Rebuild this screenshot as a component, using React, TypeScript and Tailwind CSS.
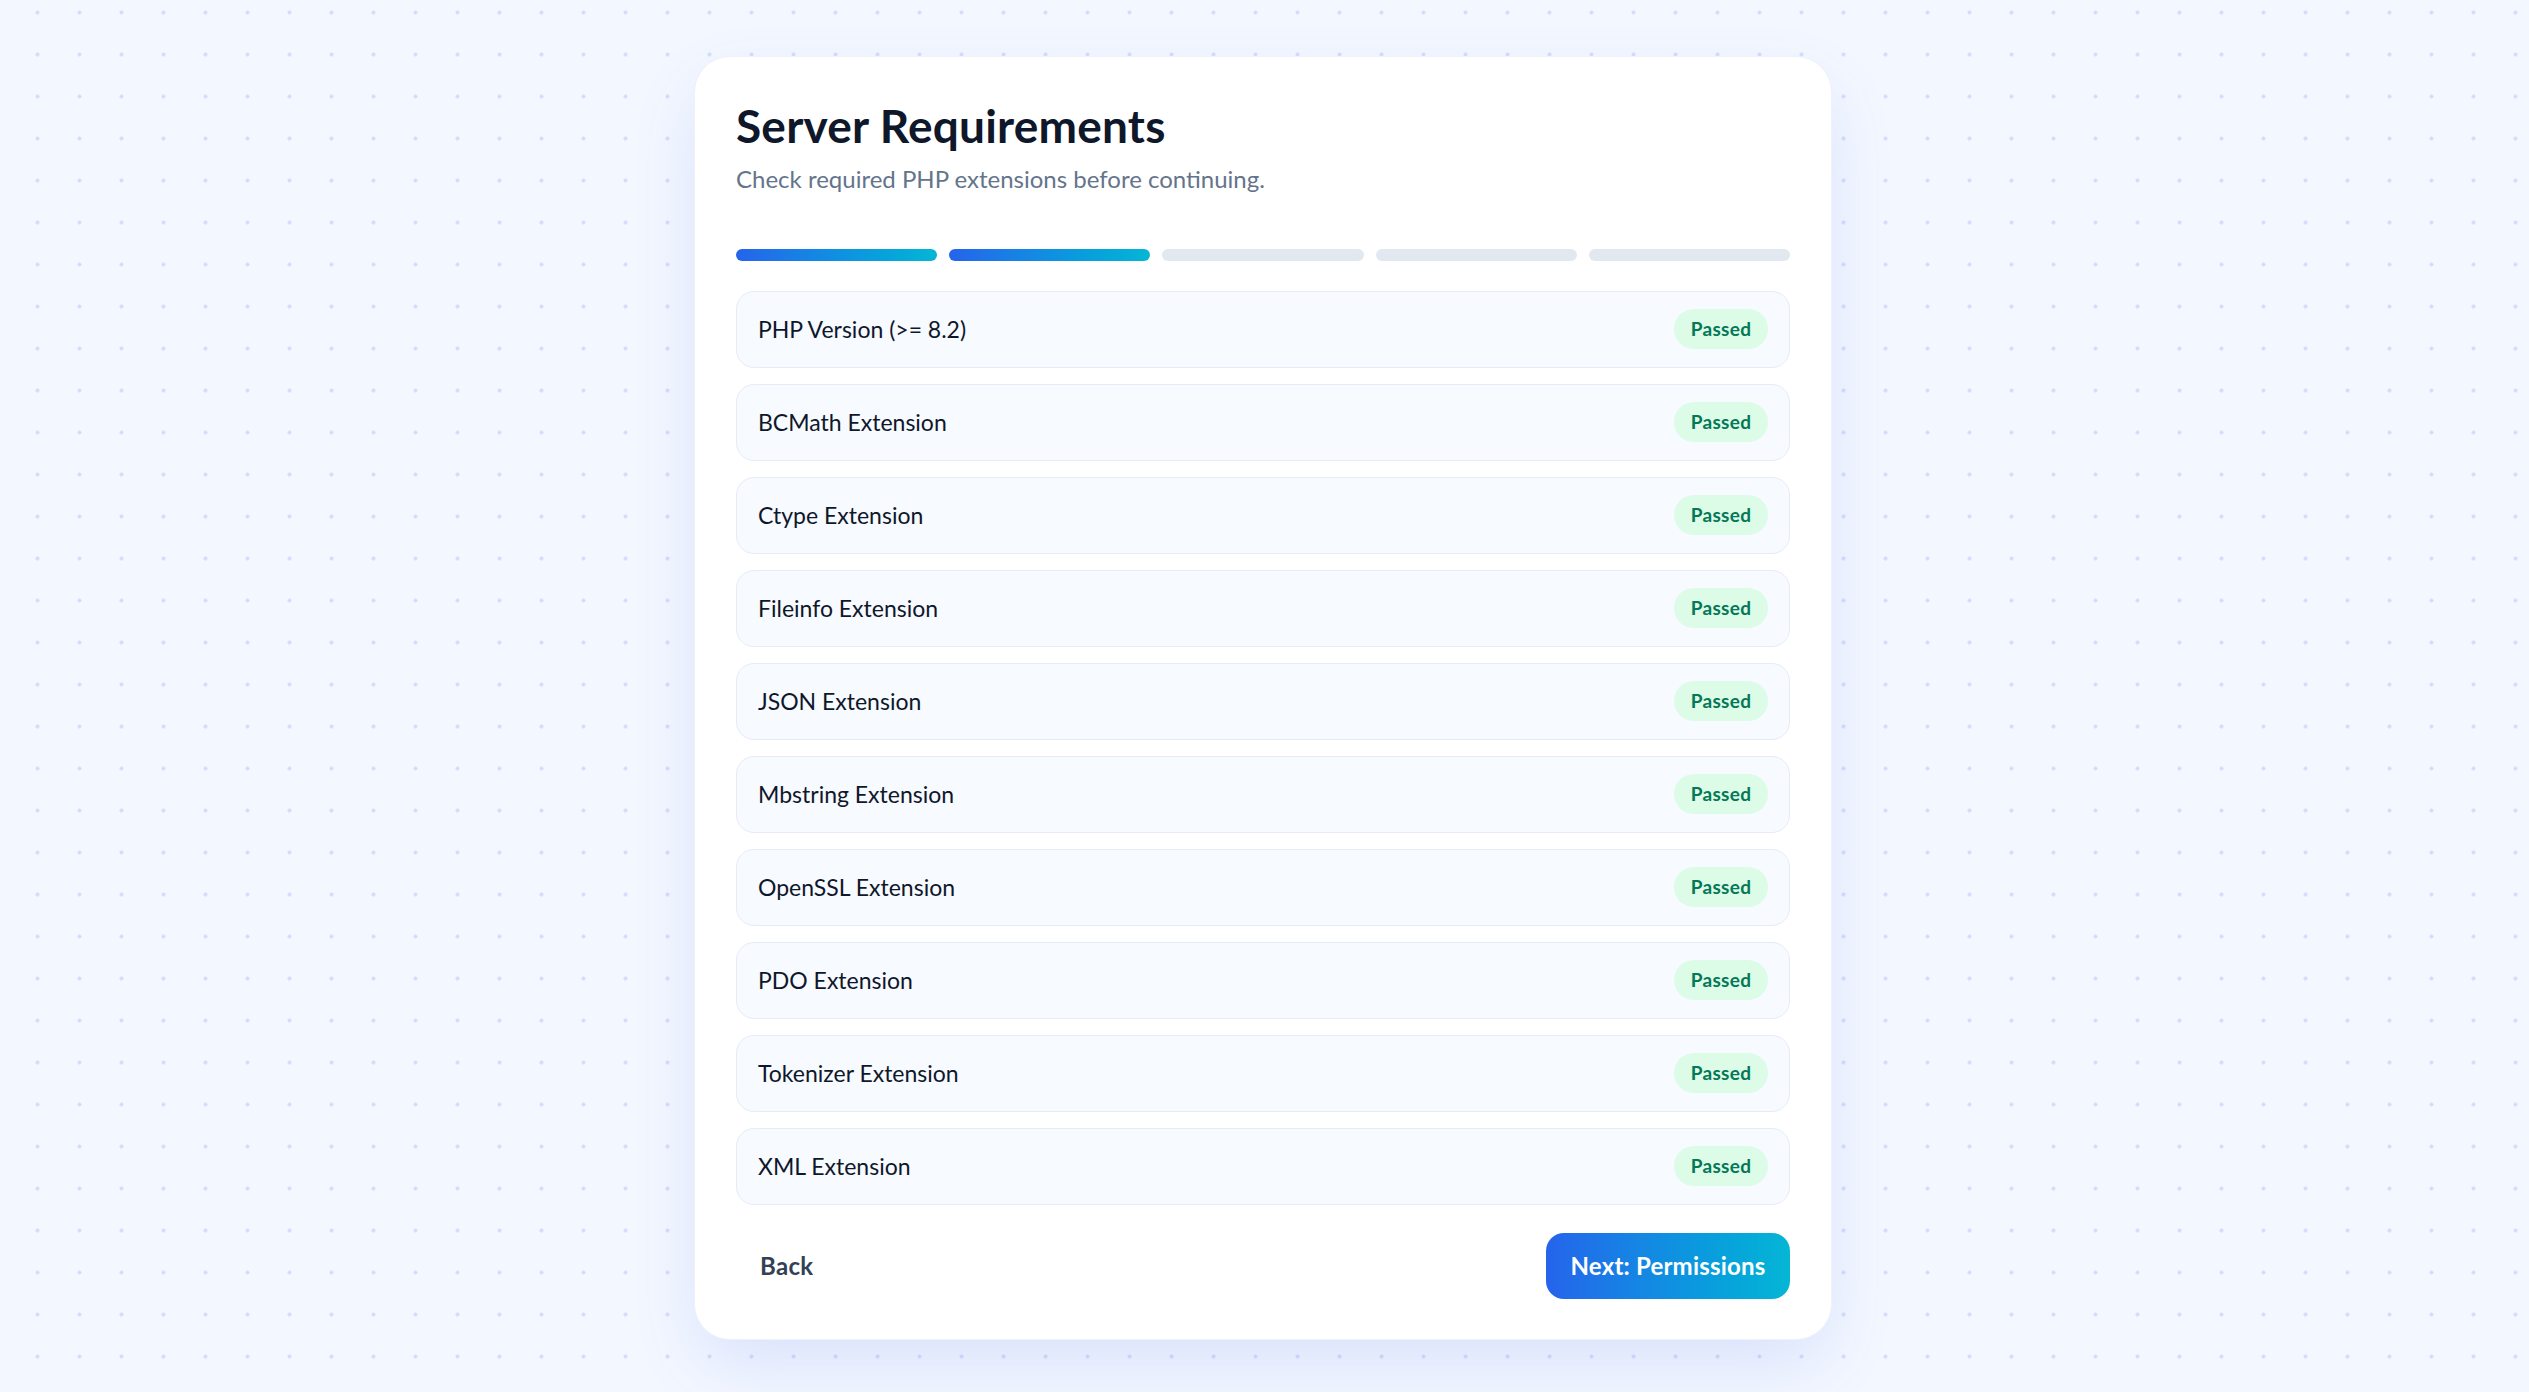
import React from "react";

const items = [
  "PHP Version (>= 8.2)",
  "BCMath Extension",
  "Ctype Extension",
  "Fileinfo Extension",
  "JSON Extension",
  "Mbstring Extension",
  "OpenSSL Extension",
  "PDO Extension",
  "Tokenizer Extension",
  "XML Extension",
];

export default function App() {
  return (
    <div
      className="min-h-[1392px] w-full flex justify-center pt-[56px] pr-[3px] bg-[#f3f7ff] bg-[radial-gradient(circle,#d3dbfd_1.6px,transparent_1.8px)] bg-[length:42px_42px] bg-[position:16.5px_33.5px]"
      style={{ fontFamily: "Lato, 'Noto Sans', sans-serif" }}
    >
      <div className="w-[1138px] h-fit bg-white rounded-[36px] border border-[#eef2fd] shadow-[0_28px_70px_-6px_rgba(59,100,230,0.14)] px-[41px] pt-[42px] pb-[40px] flex flex-col">
        <h1 className="text-[46px] leading-[1.2] font-bold text-[#0f172a] tracking-[0.2px] -mt-[1px]">
          Server Requirements
        </h1>
        <p className="mt-[12px] text-[24px] leading-[1.2] text-[#64748b]">
          Check required PHP extensions before continuing.
        </p>
        <div className="mt-[55px] grid grid-cols-5 gap-[12px]">
          <div className="h-[12px] rounded-full bg-gradient-to-r from-[#2563eb] to-[#06b6d4]" />
          <div className="h-[12px] rounded-full bg-gradient-to-r from-[#2563eb] to-[#06b6d4]" />
          <div className="h-[12px] rounded-full bg-[#e2e8f0]" />
          <div className="h-[12px] rounded-full bg-[#e2e8f0]" />
          <div className="h-[12px] rounded-full bg-[#e2e8f0]" />
        </div>
        <div className="mt-[30px] flex flex-col gap-[16px]">
          {items.map((name) => (
            <div
              key={name}
              className="h-[77px] flex items-center justify-between rounded-[18px] border border-[#e6ebfa] bg-[#f7faff] pl-[21px] pr-[21px]"
            >
              <span className="text-[23px] text-[#0f172a]">{name}</span>
              <span className="h-[40px] w-[94px] flex items-center justify-center rounded-full bg-[#dcfce7] text-[19px] font-bold tracking-[0.3px] text-[#047857]">
                Passed
              </span>
            </div>
          ))}
        </div>
        <div className="mt-[28px] flex items-center justify-between">
          <button className="h-[66px] px-[24px] text-[24px] font-bold tracking-[0.3px] text-[#334155]">
            Back
          </button>
          <button className="h-[66px] w-[244px] rounded-[18px] bg-gradient-to-r from-[#2563eb] to-[#06b6d4] text-[24px] font-bold tracking-[0.2px] text-white">
            Next: Permissions
          </button>
        </div>
      </div>
    </div>
  );
}
